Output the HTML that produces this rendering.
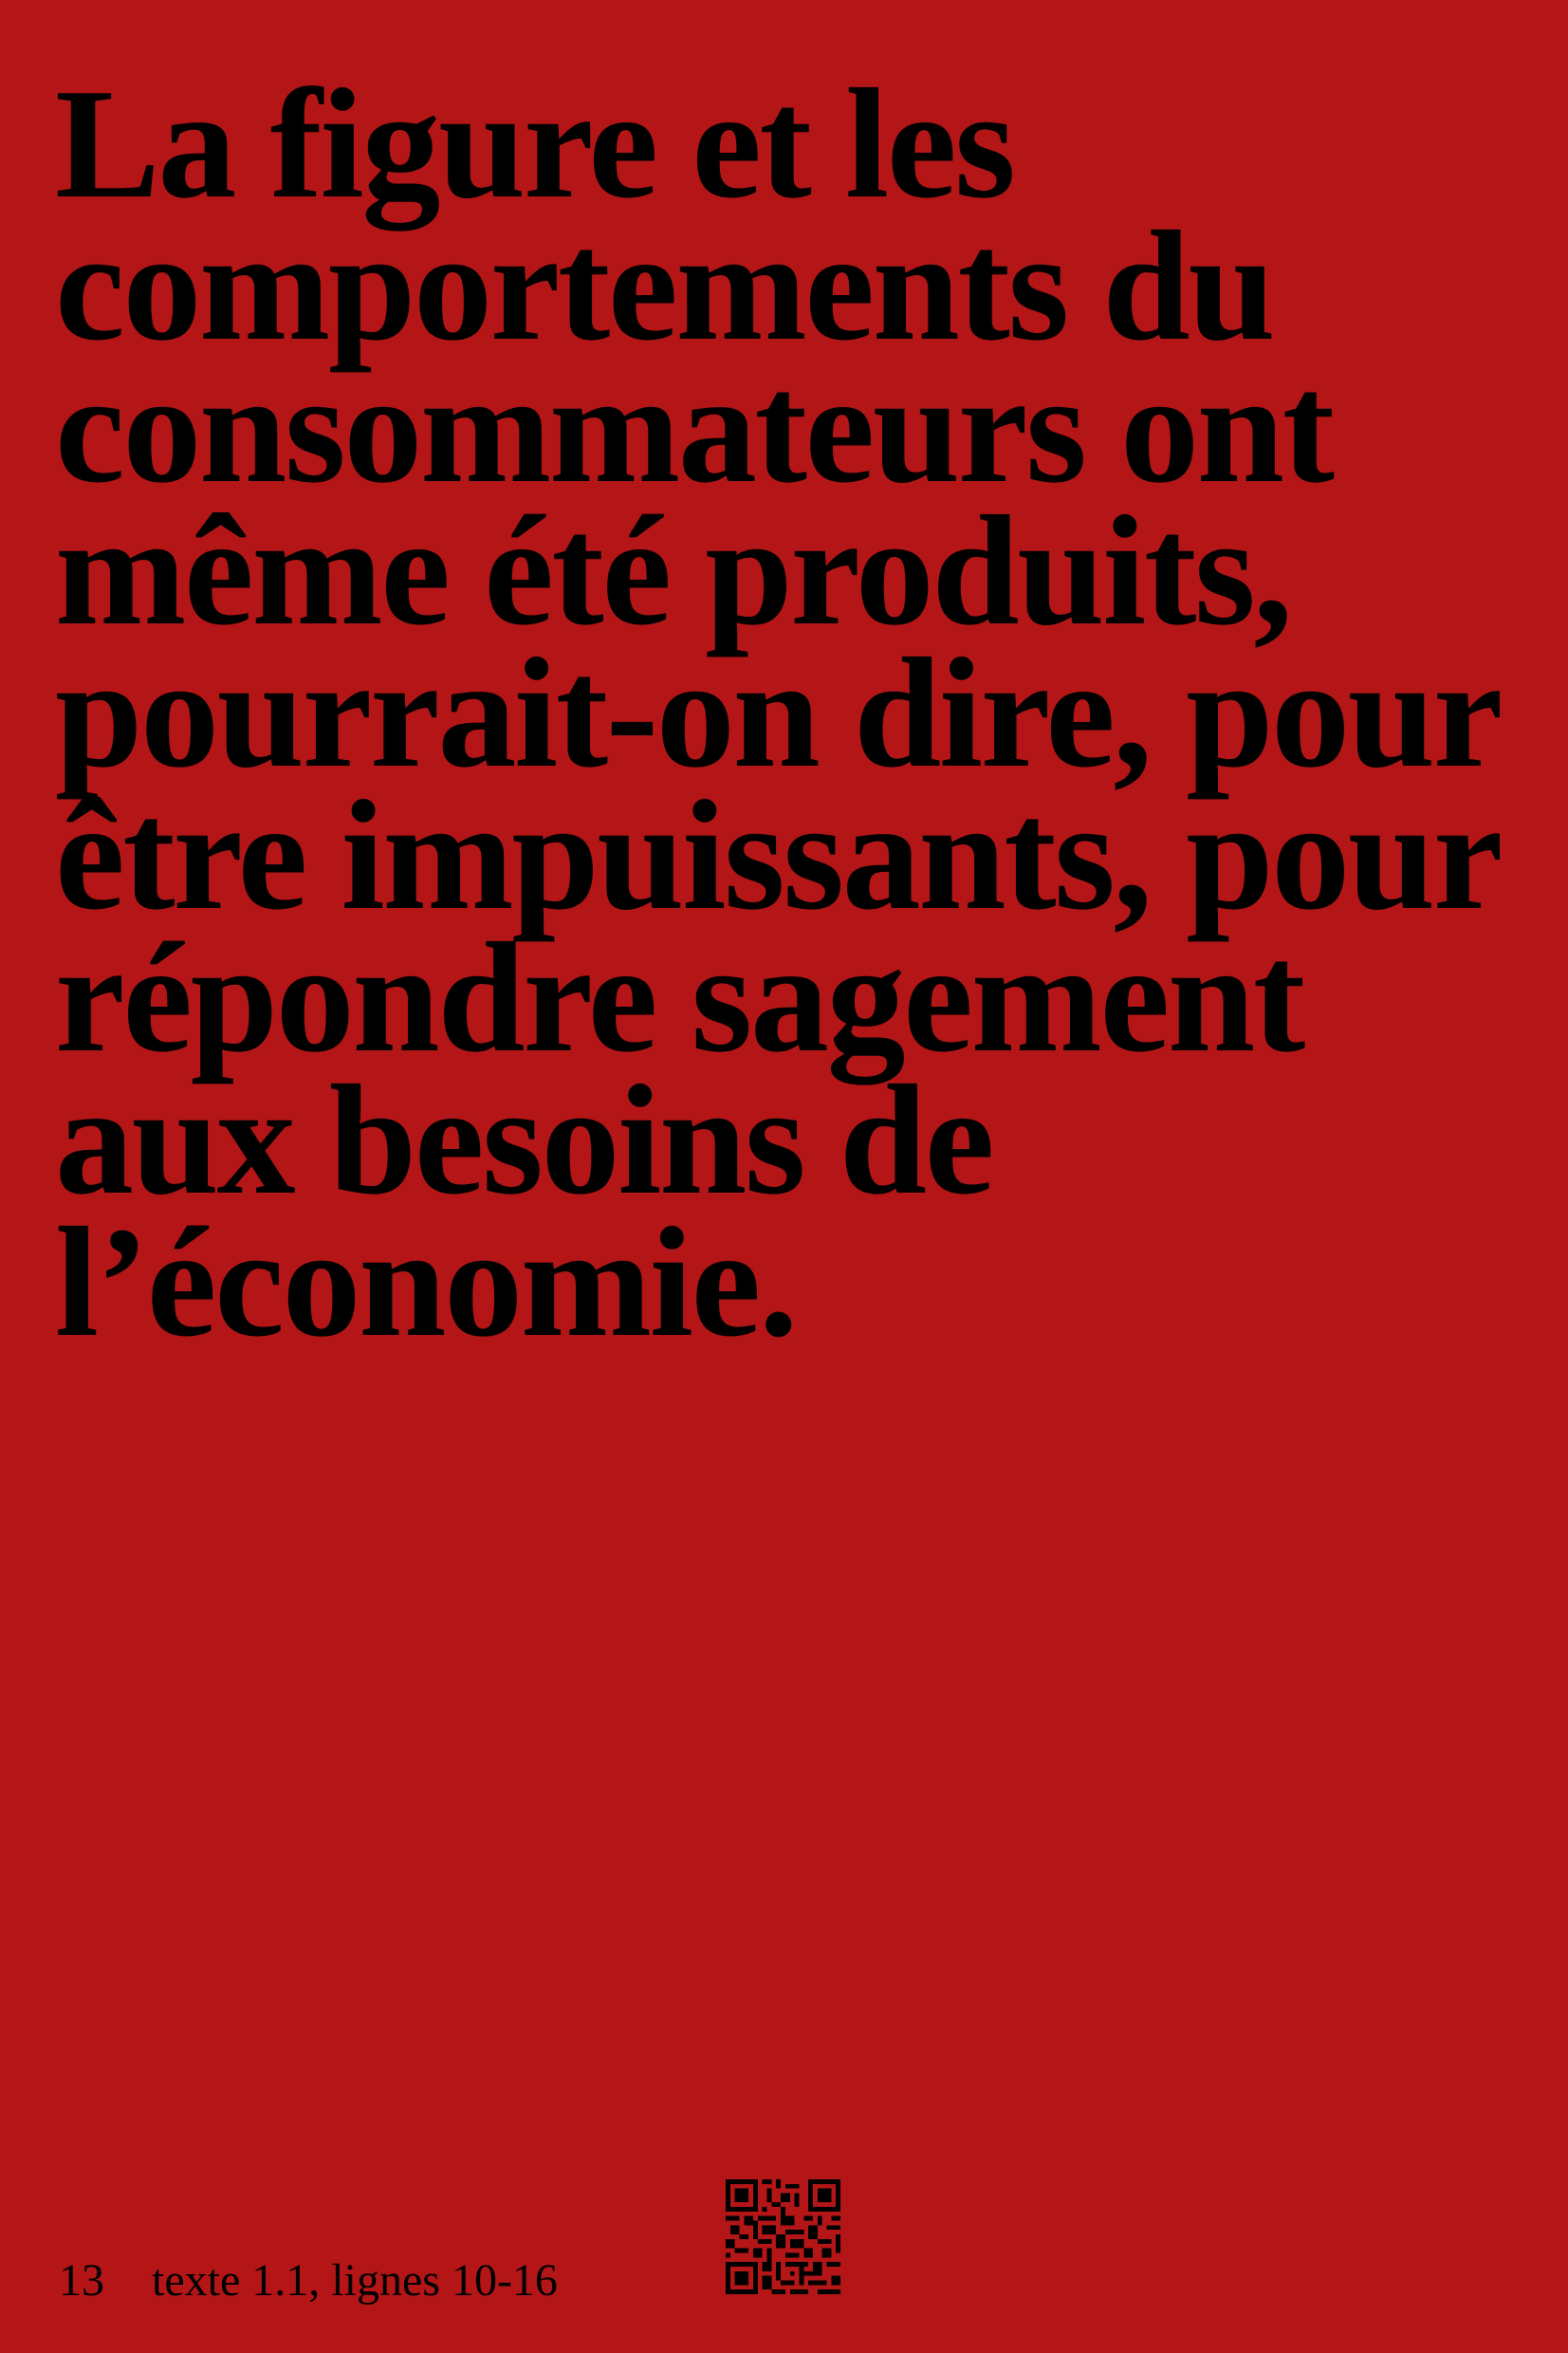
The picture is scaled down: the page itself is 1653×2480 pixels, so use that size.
<!DOCTYPE html>
<html><head><meta charset="utf-8"><style>
html,body{margin:0;padding:0;}
body{width:1653px;height:2480px;background:#b41617;position:relative;overflow:hidden;}
h1{position:absolute;left:58px;top:76px;margin:0;font-family:"Liberation Serif",serif;font-weight:bold;font-size:166px;line-height:150px;letter-spacing:-0.014em;word-spacing:-0.01em;color:#000;white-space:nowrap;}
.f{position:absolute;top:2374px;font-family:"Liberation Serif",serif;font-size:48px;line-height:60px;color:#000;white-space:nowrap;}
svg{position:absolute;left:765px;top:2297px;}
</style></head><body>
<h1>La figure et les<br>comportements du<br>consommateurs ont<br>même été produits,<br>pourrait-on dire, pour<br>être impuissants, pour<br>répondre sagement<br>aux besoins de<br>l’économie.</h1>
<div class="f" style="left:62px">13</div>
<div class="f" style="left:160px">texte 1.1, lignes 10-16</div>
<svg width="121" height="121" viewBox="0 0 25 25" shape-rendering="crispEdges">
<g fill="#000">
<path d="M0 0h7v7h-7zM1 1v5h5v-5zM2 2h3v3h-3z" fill-rule="evenodd"/>
<path d="M18 0h7v7h-7zM19 1v5h5v-5zM20 2h3v3h-3z" fill-rule="evenodd"/>
<path d="M0 18h7v7h-7zM1 19v5h5v-5zM2 20h3v3h-3z" fill-rule="evenodd"/>
<rect x="8" y="0" width="2" height="1"/><rect x="11" y="0" width="1" height="2"/><rect x="13" y="1" width="3" height="1"/><rect x="9" y="2" width="1" height="3"/><rect x="12" y="3" width="2" height="2"/><rect x="15" y="3" width="1" height="3"/><rect x="10" y="5" width="2" height="1"/><rect x="8" y="6" width="1" height="1"/><rect x="12" y="6" width="1" height="2"/>
<rect x="0" y="8" width="3" height="1"/><rect x="4" y="8" width="2" height="2"/><rect x="7" y="8" width="4" height="1"/><rect x="12" y="8" width="3" height="2"/><rect x="17" y="8" width="2" height="1"/><rect x="20" y="8" width="1" height="2"/><rect x="23" y="8" width="2" height="1"/>
<rect x="1" y="10" width="2" height="2"/><rect x="6" y="9" width="1" height="4"/><rect x="8" y="10" width="3" height="2"/><rect x="13" y="11" width="4" height="1"/><rect x="18" y="10" width="2" height="3"/><rect x="22" y="10" width="3" height="1"/>
<rect x="0" y="13" width="2" height="2"/><rect x="3" y="12" width="2" height="1"/><rect x="7" y="13" width="3" height="1"/><rect x="11" y="12" width="2" height="3"/><rect x="14" y="13" width="3" height="2"/><rect x="20" y="13" width="3" height="1"/><rect x="24" y="12" width="1" height="4"/>
<rect x="2" y="15" width="3" height="1"/><rect x="6" y="15" width="2" height="2"/><rect x="9" y="15" width="1" height="3"/><rect x="13" y="16" width="3" height="1"/><rect x="17" y="15" width="2" height="2"/><rect x="21" y="15" width="2" height="2"/><rect x="0" y="16" width="1" height="1"/>
<rect x="8" y="18" width="2" height="2"/><rect x="11" y="18" width="1" height="4"/><rect x="13" y="18" width="5" height="1"/><rect x="16" y="18" width="1" height="5"/><rect x="14" y="20" width="1" height="1"/><rect x="16" y="20" width="5" height="1"/><rect x="19" y="18" width="2" height="2"/><rect x="22" y="18" width="3" height="1"/>
<rect x="8" y="21" width="2" height="3"/><rect x="12" y="22" width="3" height="1"/><rect x="18" y="22" width="4" height="1"/><rect x="23" y="21" width="2" height="2"/><rect x="10" y="24" width="3" height="1"/><rect x="14" y="24" width="4" height="1"/><rect x="20" y="24" width="5" height="1"/>
</g></svg>
</body></html>
